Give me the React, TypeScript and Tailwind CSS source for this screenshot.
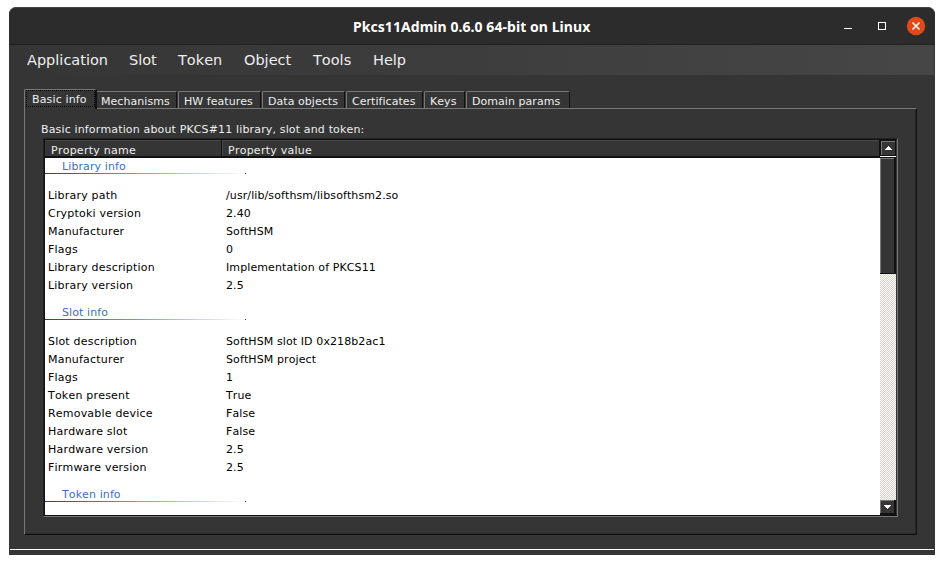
import type { ReactNode } from "react";

const menus = [
  { label: "Application", box: "w-[102px]" },
  { label: "Slot", box: "w-[49px]" },
  { label: "Token", box: "w-[66px]" },
  { label: "Object", box: "w-[69px]" },
  { label: "Tools", box: "w-[60px]" },
  { label: "Help", box: "w-[50px]" },
];

const tabs = [
  { label: "Mechanisms", box: "w-[80px]" },
  { label: "HW features", box: "w-[83px]" },
  { label: "Data objects", box: "w-[83px]" },
  { label: "Certificates", box: "w-[77px]" },
  { label: "Keys", box: "w-[41px]" },
  { label: "Domain params", box: "w-[104px]" },
];

const libraryRows = [
  ["Library path", "/usr/lib/softhsm/libsofthsm2.so"],
  ["Cryptoki version", "2.40"],
  ["Manufacturer", "SoftHSM"],
  ["Flags", "0"],
  ["Library description", "Implementation of PKCS11"],
  ["Library version", "2.5"],
];

const slotRows = [
  ["Slot description", "SoftHSM slot ID 0x218b2ac1"],
  ["Manufacturer", "SoftHSM project"],
  ["Flags", "1"],
  ["Token present", "True"],
  ["Removable device", "False"],
  ["Hardware slot", "False"],
  ["Hardware version", "2.5"],
  ["Firmware version", "2.5"],
];

function TitleBar() {
  return (
    <header className="flex h-[38px] shrink-0 items-center rounded-t-[7px] border-b border-t border-b-[#212121] border-t-[#454545] bg-[#2c2c2c]">
      <div className="w-[820px] whitespace-nowrap pl-[344px] pt-[2px] font-['Noto_Sans',sans-serif] text-[14px] font-bold leading-5 tracking-[0.06px] text-white">
        Pkcs11Admin 0.6.0 64-bit on Linux
      </div>
      <svg width="106" height="36" viewBox="829 8 106 36" shapeRendering="crispEdges">
        <rect x="844" y="28" width="8" height="1" fill="#fff" />
        <rect x="878.5" y="22.5" width="7" height="7" fill="none" stroke="#fff" />
        <circle cx="916" cy="26" r="9.2" fill="#e04a18" shapeRendering="auto" />
        <path d="M912.5 22.5l7 7M919.5 22.5l-7 7" stroke="#fff" strokeWidth="1.5" shapeRendering="auto" />
      </svg>
    </header>
  );
}

function GroupHeader({ first, children }: { first?: boolean; children: ReactNode }) {
  return (
    <div className={first ? "h-7" : "h-[38px] pt-[10px]"}>
      <div className="h-[15px] pl-[17px] leading-[17px] text-[#3a70c4]">{children}</div>
      <div className="flex h-px w-[201px]">
        <div className="h-px w-[200px] bg-linear-to-r from-[#0f4a8c] to-white" />
        <div className="h-px w-px bg-[#16365c]" />
      </div>
    </div>
  );
}

function Rows({ rows }: { rows: string[][] }) {
  return (
    <>
      {rows.map(([name, value]) => (
        <div key={name} className="flex h-[18px] leading-[20px]">
          <div className="w-[178px] tracking-[0.2px]">{name}</div>
          <div>{value}</div>
        </div>
      ))}
    </>
  );
}

function ScrollBar() {
  return (
    <div className="flex w-4 flex-col">
      <div className="flex h-4 shrink-0 items-center justify-center border border-[#111] bg-[#353535] shadow-[inset_1px_1px_#777]">
        <svg width="7" height="4" shapeRendering="crispEdges" fill="#fff">
          <path d="M3 0h1v1h1v1h1v1h1v1H0V3h1V2h1V1h1z" />
        </svg>
      </div>
      <div className="h-px w-full shrink-0 bg-white" />
      <div className="h-[117px] shrink-0 border-b border-r-2 border-t border-[#111] bg-[#353535] shadow-[inset_1px_1px_#777]" />
      <div className="grow bg-[#fff] bg-[repeating-conic-gradient(#d4d0c8_0_25%,#ffffff_0_50%)] bg-size-[2px_2px]" />
      <div className="flex h-[15px] shrink-0 items-center justify-center border-b-2 border-r-2 border-[#111] bg-[#353535] shadow-[inset_1px_1px_#777]">
        <svg width="7" height="4" shapeRendering="crispEdges" fill="#fff">
          <path d="M0 0h7v1H6v1H5v1H4v1H3V3H2V2H1V1H0z" />
        </svg>
      </div>
    </div>
  );
}

export default function App() {
  return (
    <div className="h-[564px] w-[944px] overflow-hidden bg-white pl-[9px] pt-[7px] font-['DejaVu_Sans',sans-serif] text-[11px] tracking-[0.1px] [font-kerning:none]">
      <div className="flex h-[548px] w-[926px] flex-col rounded-t-[8px] bg-[#353535]">
        <TitleBar />
        <nav className="mx-px flex h-[30px] shrink-0 bg-linear-to-r from-[#353535] to-[#464646] pl-[17px] text-[14.5px] leading-[30px] tracking-normal text-[#eee]">
          {menus.map((m) => (
            <div key={m.label} className={m.box}>{m.label}</div>
          ))}
        </nav>
        <div className="ml-[15px] mt-[14px] flex h-[19px] shrink-0 items-end whitespace-nowrap tracking-[0.05px] text-[#eee]">
          <div className="z-10 -mb-px h-5 w-[73px] rounded-tl-[2px] border-l border-r-2 border-t border-l-[#777] border-r-[#111] border-t-[#777] bg-[#353535]">
            <div className="ml-px h-[17px] w-[69px] border border-dotted border-black pl-[5px] leading-[17px] tracking-[0.15px]">Basic info</div>
          </div>
          {tabs.map((t, i) => (
            <div
              key={t.label}
              className={`h-[17px] border-r border-t border-r-[#111] border-t-[#777] leading-[19px] ${i ? "ml-px rounded-tl-[2px] border-l border-l-[#777] pl-[5px]" : "pl-[4px]"} ${t.box}`}
            >
              {t.label}
            </div>
          ))}
        </div>
        <main className="ml-[15px] h-[427px] w-[893px] shrink-0 border-b border-l border-r border-t border-b-[#111] border-l-[#777] border-r-[#111] border-t-[#777] pl-[18px] shadow-[inset_-1px_-1px_#292929]">
          <div className="-ml-[2px] h-[29px] pt-[12px] leading-[17px] tracking-[0.15px] text-[#eee]">
            Basic information about PKCS#11 library, slot and token:
          </div>
          <div className="flex h-[379px] w-[855px] border border-b-[#777] border-l-[#222] border-r-[#777] border-t-[#222]">
            <div className="flex w-[853px] border-b border-l border-t border-[#111]">
              <div className="w-[835px] bg-white">
                <div className="flex h-[18px] border-b-2 border-[#111] bg-[#353535] leading-[21px] tracking-[0.25px] text-[#eee] shadow-[inset_0_1px_#484848]">
                  <div className="w-[177px] border-r border-[#111] pl-[6px]">Property name</div>
                  <div className="grow border-l border-r border-l-[#484848] border-r-[#111] pl-[5px]">Property value</div>
                </div>
                <div className="text-black">
                  <GroupHeader first>Library info</GroupHeader>
                  <div className="pl-[3px]"><Rows rows={libraryRows} /></div>
                  <GroupHeader>Slot info</GroupHeader>
                  <div className="pl-[3px]"><Rows rows={slotRows} /></div>
                  <GroupHeader>Token info</GroupHeader>
                </div>
              </div>
              <ScrollBar />
            </div>
          </div>
        </main>
        <div className="mx-px mt-[14px] h-px shrink-0 bg-white" />
      </div>
    </div>
  );
}
